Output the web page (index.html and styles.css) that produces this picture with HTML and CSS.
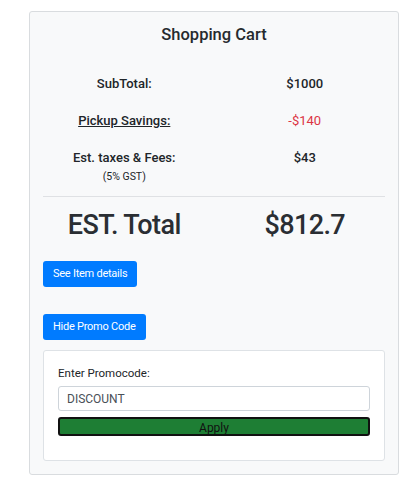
FILE: index.html
```html
<!DOCTYPE html>
<html>
<head>
<meta charset="utf-8">
<link rel="stylesheet" href="styles.css">
</head>
<body>
<div class="cart">
  <h5 class="title">Shopping Cart</h5>
  <div class="rows">
    <div class="row">
      <div class="label">SubTotal:</div>
      <div class="value">$1000</div>
    </div>
    <div class="row">
      <div class="label"><u>Pickup Savings:</u></div>
      <div class="value red">-$140</div>
    </div>
    <div class="row">
      <div class="label">Est. taxes &amp; Fees:<div class="small">(5% GST)</div></div>
      <div class="value">$43</div>
    </div>
  </div>
  <hr class="divider">
  <div class="row total">
    <div class="label">EST. Total</div>
    <div class="value">$812.7</div>
  </div>
  <button class="btn btn-first">See Item details</button>
  <button class="btn btn-second">Hide Promo Code</button>
  <div class="promo">
    <div class="promo-label">Enter Promocode:</div>
    <input class="promo-input" type="text" value="DISCOUNT">
    <button class="apply">Apply</button>
  </div>
</div>
</body>
</html>
```
FILE: styles.css
```css
html, body {
  margin: 0;
  padding: 0;
  background: #ffffff;
}
body {
  font-family: Roboto, Lato, sans-serif;
  color: #212529;
}
.cart {
  box-sizing: border-box;
  width: 370px;
  height: 464px;
  margin: 11px 0 0 29px;
  padding: 11px 13px 12px;
  background: #f8f9fa;
  border: 1px solid #d9dcdf;
  border-radius: 3px;
  display: flex;
  flex-direction: column;
}
.title {
  margin: 0;
  font-size: 16.5px;
  font-weight: 500;
  line-height: 24px;
  text-align: center;
  color: #262a2e;
}
.rows {
  margin-top: 27px;
  display: flex;
  flex-direction: column;
  gap: 17px;
}
.row {
  display: grid;
  grid-template-columns: 1fr 1fr;
  margin: 0 -10px 0 -9px;
  text-align: center;
  font-size: 13px;
  font-weight: 500;
  line-height: 20px;
}
.red { color: #dc3545; font-weight: 400; }
.small {
  font-size: 10.5px;
  font-weight: 400;
  line-height: 18px;
}
.divider {
  margin: 10px 0 0;
  border: 0;
  border-top: 1px solid #dfe1e4;
  height: 0;
}
.total {
  margin-top: 8px;
  font-size: 27px;
  font-weight: 500;
  letter-spacing: -0.6px;
  line-height: 40px;
  color: #2a2e33;
}
.btn {
  align-self: flex-start;
  font-family: inherit;
  height: 26px;
  padding: 0 10px;
  border: 0;
  border-radius: 3px;
  background: #007bff;
  color: #ffffff;
  font-size: 11px;
  letter-spacing: -0.25px;
  line-height: 26px;
}
.btn-first { margin-top: 16px; }
.btn-second { margin-top: 27px; }
.promo {
  margin-top: 10px;
  background: #ffffff;
  border: 1px solid #dee2e6;
  border-radius: 3px;
  height: 111px;
  box-sizing: border-box;
  padding: 14px 14px 0;
  display: flex;
  flex-direction: column;
}
.promo-label {
  font-size: 11.5px;
  line-height: 16px;
}
.promo-input {
  margin: 5px 0 0;
  box-sizing: border-box;
  height: 25px;
  border: 1px solid #ced4da;
  border-radius: 3px;
  padding: 0 8px;
  font-family: inherit;
  font-size: 12px;
  color: #495057;
  background: #fff;
}
.apply {
  margin-top: 6px;
  box-sizing: border-box;
  height: 19px;
  border: 2px solid #111;
  border-radius: 3px;
  background: #1e7e34;
  color: #111;
  font-family: inherit;
  font-size: 12px;
  line-height: 16px;
  padding: 1px 0 0;
}
```
